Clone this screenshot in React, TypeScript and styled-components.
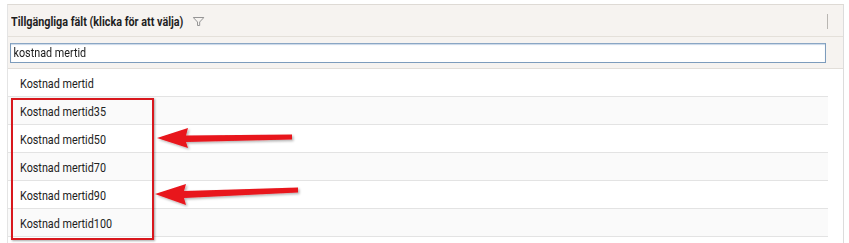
import { useEffect, useRef } from "react"
import styled, { createGlobalStyle } from "styled-components"

const GlobalStyle = createGlobalStyle`
    body {
        margin: 0;
        background: #ffffff;
        font-family: Roboto, "Liberation Sans", sans-serif;
        color: #222222;
    }
`

// the original UI uses a condensed face; Roboto squeezed horizontally stands in for it
const Condensed = styled.span`
    display: inline-flex;
    align-items: center;
    white-space: nowrap;
    transform: scaleX(0.83);
    transform-origin: left center;
`

const Panel = styled.section`
    position: relative;
    margin: 4px 0 0 7px;
    width: 835px;
    border-top: 1px solid #dedad5;
    border-left: 1px solid #e4e4e4;
    border-right: 1px solid #dcdcdc;
    height: 240px;
`
const Header = styled.header`
    height: 31px;
    background: #f6f3f0;
    border-bottom: 1px solid #e4e0da;
    display: flex;
    align-items: center;
    padding: 0 15px 0 3px;
`
const Title = styled.h2`
    margin: 0;
    font-size: 13px;
    font-weight: bold;
    color: #1e1e1e;
    padding-top: 1px;
`
const Divider = styled.span`
    margin-left: auto;
    width: 1px;
    height: 15px;
    background: #b9b6b2;
    margin-top: 2px;
`
const SearchBar = styled.div`
    height: 32px;
    background: #f6f3f0;
    border-bottom: 1px solid #e2ded9;
    display: flex;
    align-items: center;
    padding: 0 17px 0 2px;
    box-sizing: border-box;
`
const Field = styled.label`
    flex: 1;
    height: 20px;
    box-sizing: border-box;
    border: 1px solid #7d9cbc;
    border-top-color: #8aa6c4;
    box-shadow: inset 0 1px 1px #c9d8e8;
    background: #ffffff;
    overflow: hidden;
    display: flex;
    align-items: center;
`
const Input = styled.input`
    width: 120.5%;
    flex: none;
    height: 18px;
    border: none;
    background: transparent;
    padding: 0 0 0 3px;
    font-family: inherit;
    font-size: 13px;
    color: #1a1a1a;
    caret-color: #000000;
    outline: none;
    transform: scaleX(0.83);
    transform-origin: left center;
`
const List = styled.ul`
    list-style: none;
    margin: 0;
    padding: 0;
    width: 820px;
`
const Row = styled.li<{ $alt: boolean }>`
    border-bottom: 1px solid #e3e3e3;
    background: ${({ $alt }) => ($alt ? "#fafafa" : "#ffffff")};
    display: flex;
    align-items: center;
    padding: 1px 0 0 12px;
    height: 26px;
    font-size: 13px;
    color: #222222;
`
const Marker = styled.div`
    position: absolute;
    left: 3px;
    top: 93px;
    width: 143px;
    height: 142px;
    box-sizing: border-box;
    border: 2px solid #d8171d;
    box-shadow: 1px 1px 2px rgba(0, 0, 0, 0.35);
    pointer-events: none;
`
const Overlay = styled.svg`
    position: absolute;
    left: -8px;
    top: -5px;
    pointer-events: none;
`

// drawn wider than shown, the title's squeeze brings it back to ~11px
const Funnel = () => (
    <svg width="14" height="9" viewBox="0 0 14 9" style={{ marginLeft: 11 }}>
        <path d="M0.6 0.5 H13.4 L8.3 5 V8.5 H5.7 V5 Z" fill="none" stroke="#8c8c8c" strokeWidth="1" />
    </svg>
)

const fields = [
    "Kostnad mertid",
    "Kostnad mertid35",
    "Kostnad mertid50",
    "Kostnad mertid70",
    "Kostnad mertid90",
    "Kostnad mertid100",
]

const App = () => {
    const search = useRef<HTMLInputElement>(null)

    useEffect(() => {
        const el = search.current
        if (!el) return
        el.focus()
        el.setSelectionRange(el.value.length, el.value.length)
    }, [])

    return (
        <>
            <GlobalStyle />
            <Panel>
                <Header>
                    <Title>
                        <Condensed>
                            Tillgängliga fält (klicka för att välja)
                            <Funnel />
                        </Condensed>
                    </Title>
                    <Divider />
                </Header>
                <SearchBar>
                    <Field>
                        <Input ref={search} defaultValue="kostnad mertid" />
                    </Field>
                </SearchBar>
                <List>
                    {fields.map((f, i) => (
                        <Row key={f} $alt={i % 2 === 1}>
                            <Condensed>{f}</Condensed>
                        </Row>
                    ))}
                </List>
                <Marker />
                <Overlay width="849" height="243" viewBox="0 0 849 243">
                    <defs>
                        <filter id="sh" x="-10%" y="-30%" width="130%" height="180%">
                            <feDropShadow dx="1.5" dy="1.5" stdDeviation="1" floodColor="#000" floodOpacity="0.3" />
                        </filter>
                    </defs>
                    <g fill="#e8141b" filter="url(#sh)">
                        <polygon points="157,138 188,128 186,135.5 292,134.5 292,139.5 186,142 188,148" />
                        <polygon points="155,194 186,184 184,191 298,187.5 298,192.5 184,198 186,205" />
                    </g>
                </Overlay>
            </Panel>
        </>
    )
}

export default App
